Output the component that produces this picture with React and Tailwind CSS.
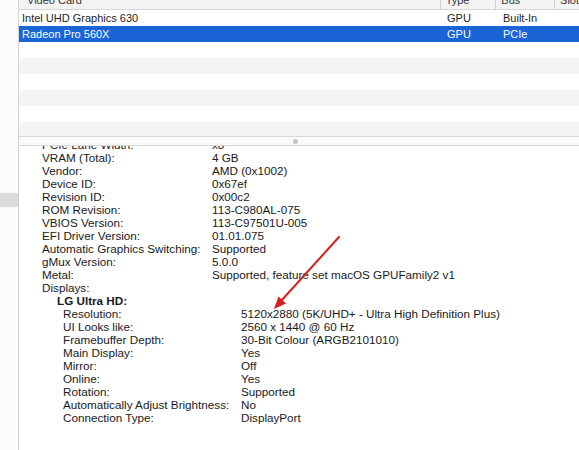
import React from "react";

const groupA = [
  ["PCIe Lane Width:", "x8"],
  ["VRAM (Total):", "4 GB"],
  ["Vendor:", "AMD (0x1002)"],
  ["Device ID:", "0x67ef"],
  ["Revision ID:", "0x00c2"],
  ["ROM Revision:", "113-C980AL-075"],
  ["VBIOS Version:", "113-C97501U-005"],
  ["EFI Driver Version:", "01.01.075"],
  ["Automatic Graphics Switching:", "Supported"],
  ["gMux Version:", "5.0.0"],
  ["Metal:", "Supported, feature set macOS GPUFamily2 v1"],
];

const groupB = [
  ["Resolution:", "5120x2880 (5K/UHD+ - Ultra High Definition Plus)"],
  ["UI Looks like:", "2560 x 1440 @ 60 Hz"],
  ["Framebuffer Depth:", "30-Bit Colour (ARGB2101010)"],
  ["Main Display:", "Yes"],
  ["Mirror:", "Off"],
  ["Online:", "Yes"],
  ["Rotation:", "Supported"],
  ["Automatically Adjust Brightness:", "No"],
  ["Connection Type:", "DisplayPort"],
];

function Row({ name, type, bus, selected, stripe }) {
  const bg = selected ? "bg-[#1a64d6] text-white" : stripe ? "bg-[#f4f5f5]" : "bg-white";
  return (
    <div className={`flex h-[16px] items-center shrink-0 ${bg}`}>
      <div className="w-[423px] pl-[3px] whitespace-nowrap">{name}</div>
      <div className="w-[56px] pl-[5px] whitespace-nowrap">{type}</div>
      <div className="w-[59px] pl-[5px] whitespace-nowrap">{bus}</div>
      <div className="flex-1"></div>
    </div>
  );
}

export default function App() {
  return (
    <div className="relative w-[579px] h-[450px] flex bg-white overflow-hidden font-['Liberation_Sans',Arial,sans-serif] text-[11px] text-[#1e1e1e]">
      <div className="w-[19px] shrink-0 border-r border-[#d2d2d2] bg-[#fbfbfb] flex flex-col">
        <div className="h-[193px]"></div>
        <div className="h-[14px] bg-[#dcdcdc]"></div>
      </div>
      <div className="flex-1 flex flex-col min-w-0">
        <div className="h-[136px] flex flex-col overflow-hidden shrink-0">
          <div className="h-[10px] shrink-0 overflow-hidden bg-[#f3f3f3] border-b border-[#d6d6d6]">
            <div className="flex h-[18px] -mt-[9px] items-center text-[#333]">
              <div className="w-[423px] pl-[8px] whitespace-nowrap">Video Card</div>
              <div className="w-[56px] h-full pl-[5px] border-l border-[#d0d0d0] flex items-center">Type</div>
              <div className="w-[59px] h-full pl-[5px] border-l border-[#d0d0d0] flex items-center">Bus</div>
              <div className="flex-1 h-full pl-[5px] border-l border-[#d0d0d0] flex items-center">Slot</div>
            </div>
          </div>
          <Row name="Intel UHD Graphics 630" type="GPU" bus="Built-In" />
          <Row name="Radeon Pro 560X" type="GPU" bus="PCIe" selected />
          <Row />
          <Row stripe />
          <Row />
          <Row stripe />
          <Row />
          <Row stripe />
        </div>
        <div className="h-[10px] shrink-0 border-y border-[#d8d8d8] bg-[#fafafa] flex items-center justify-center">
          <div className="w-[5px] h-[5px] rounded-full bg-[#c4c4c4] -ml-[8px]"></div>
        </div>
        <div className="flex-1 overflow-hidden text-[11.7px] text-[#1a1a1a]">
          <div className="-mt-[8px] flex flex-col">
            {groupA.map(([k, v]) => (
              <div key={k} className="flex h-[13px] items-center whitespace-nowrap">
                <div className="w-[193px] pl-[23px] shrink-0">{k}</div>
                <div>{v}</div>
              </div>
            ))}
            <div className="flex h-[13px] items-center whitespace-nowrap">
              <div className="pl-[23px]">Displays:</div>
            </div>
            <div className="flex h-[13px] items-center whitespace-nowrap">
              <div className="pl-[38px] font-bold">LG Ultra HD:</div>
            </div>
            {groupB.map(([k, v]) => (
              <div key={k} className="flex h-[13px] items-center whitespace-nowrap">
                <div className="w-[222px] pl-[44px] shrink-0">{k}</div>
                <div>{v}</div>
              </div>
            ))}
          </div>
        </div>
      </div>
      <svg className="absolute left-0 top-0 pointer-events-none" width="579" height="450" viewBox="0 0 579 450">
        <line x1="339" y1="237" x2="281" y2="301" stroke="#d61f1f" strokeWidth="2" strokeLinecap="round" />
        <polygon points="274,309 286,303.5 278.5,296.5" fill="#d61f1f" />
      </svg>
    </div>
  );
}
